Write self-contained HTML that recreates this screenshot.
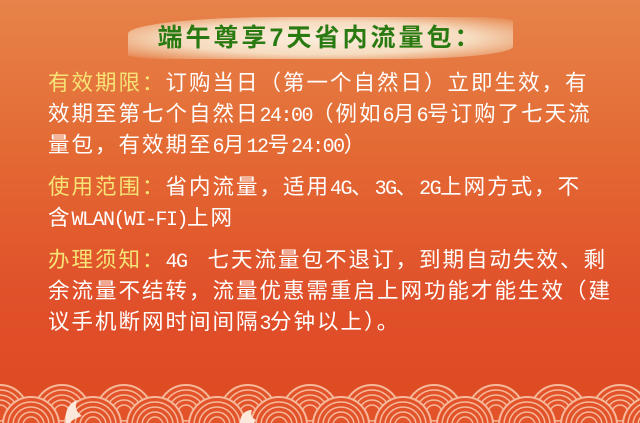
<!DOCTYPE html>
<html><head><meta charset="utf-8"><style>
html,body{margin:0;padding:0}
body{width:640px;height:423px;overflow:hidden;position:relative;
background:linear-gradient(180deg,#e6834a 0%,#e46a34 35%,#e0502a 70%,#dd4a22 100%);
font-family:"Noto Sans CJK SC","WenQuanYi Zen Hei",sans-serif;}
.banner{position:absolute;left:128px;top:17px;width:385px;height:42px;
background:radial-gradient(ellipse at 50% 50%,#fbeedd 0%,#f6dcc0 55%,rgba(240,190,150,0.6) 82%,rgba(230,130,80,0) 100%);
border-radius:40% 10% 30% 10%;}
.title{position:absolute;left:0;width:640px;top:22px;text-align:center;color:#2a7a12;
font-size:25px;font-weight:bold;letter-spacing:3px;line-height:32px;
font-family:"Liberation Sans","Noto Sans CJK SC",sans-serif;}
.txt{position:absolute;left:48px;top:66px;color:#fff;font-size:21.5px;line-height:31px;letter-spacing:2px;white-space:nowrap}
.txt div{height:31px}
.l{font-family:"Liberation Mono",monospace;font-size:20px;letter-spacing:-1.5px}
.gap{margin-top:11px}
.y{color:#f6e476}
.wv{position:absolute;left:0;top:380px;width:640px;height:43px;overflow:hidden}
.wv svg{display:block}
</style></head><body>
<div class="banner"></div>
<div class="title">端午尊享7天省内流量包：</div>
<div class="txt">
<div><span class="y">有效期限：</span>订购当日（第一个自然日）立即生效，有</div>
<div>效期至第七个自然日<span class="l">24:00</span>（例如<span class="l">6</span>月<span class="l">6</span>号订购了七天流</div>
<div>量包，有效期至<span class="l">6</span>月<span class="l">12</span>号<span class="l">24:00</span>）</div>
<div class="gap"><span class="y">使用范围：</span>省内流量，适用<span class="l">4G</span>、<span class="l">3G</span>、<span class="l">2G</span>上网方式，不</div>
<div>含<span class="l">WLAN(WI-FI)</span>上网</div>
<div class="gap"><span class="y">办理须知：</span><span class="l">4G&nbsp;&nbsp;</span>七天流量包不退订，到期自动失效、剩</div>
<div>余流量不结转，流量优惠需重启上网功能才能生效（建</div>
<div>议手机断网时间间隔<span class="l">3</span>分钟以上）。</div>
</div>
<div class="wv">
<svg width="640" height="43" viewBox="0 0 640 43" overflow="hidden">
<defs>
<g id="s">
<circle r="28" fill="#e2532a" stroke="#f7b89a" stroke-width="2"/>
<circle r="23" fill="none" stroke="#f7b89a" stroke-width="1.5"/>
<circle r="18" fill="none" stroke="#f7b89a" stroke-width="1.5"/>
<circle r="13" fill="none" stroke="#f7b89a" stroke-width="1.5"/>
<circle r="8" fill="none" stroke="#f7b89a" stroke-width="1.5"/>
</g>
</defs>
<use href="#s" x="0" y="33"/><use href="#s" x="62" y="33"/><use href="#s" x="124" y="33"/><use href="#s" x="186" y="33"/><use href="#s" x="248" y="33"/><use href="#s" x="310" y="33"/><use href="#s" x="372" y="33"/><use href="#s" x="434" y="33"/><use href="#s" x="496" y="33"/><use href="#s" x="558" y="33"/><use href="#s" x="620" y="33"/>
<use href="#s" x="31" y="45"/><use href="#s" x="93" y="45"/><use href="#s" x="155" y="45"/><use href="#s" x="217" y="45"/><use href="#s" x="279" y="45"/><use href="#s" x="341" y="45"/><use href="#s" x="403" y="45"/><use href="#s" x="465" y="45"/><use href="#s" x="527" y="45"/><use href="#s" x="589" y="45"/><use href="#s" x="651" y="45"/>
<path d="M66 43 C64 30 70 22 78 20 C74 26 76 32 82 36 C76 38 72 40 70 43Z" fill="#fde8dc"/>
<path d="M240 43 C240 34 246 30 252 30 C250 35 252 38 256 40 L254 43Z" fill="#fde8dc"/>
</svg>
</div>
</body></html>
